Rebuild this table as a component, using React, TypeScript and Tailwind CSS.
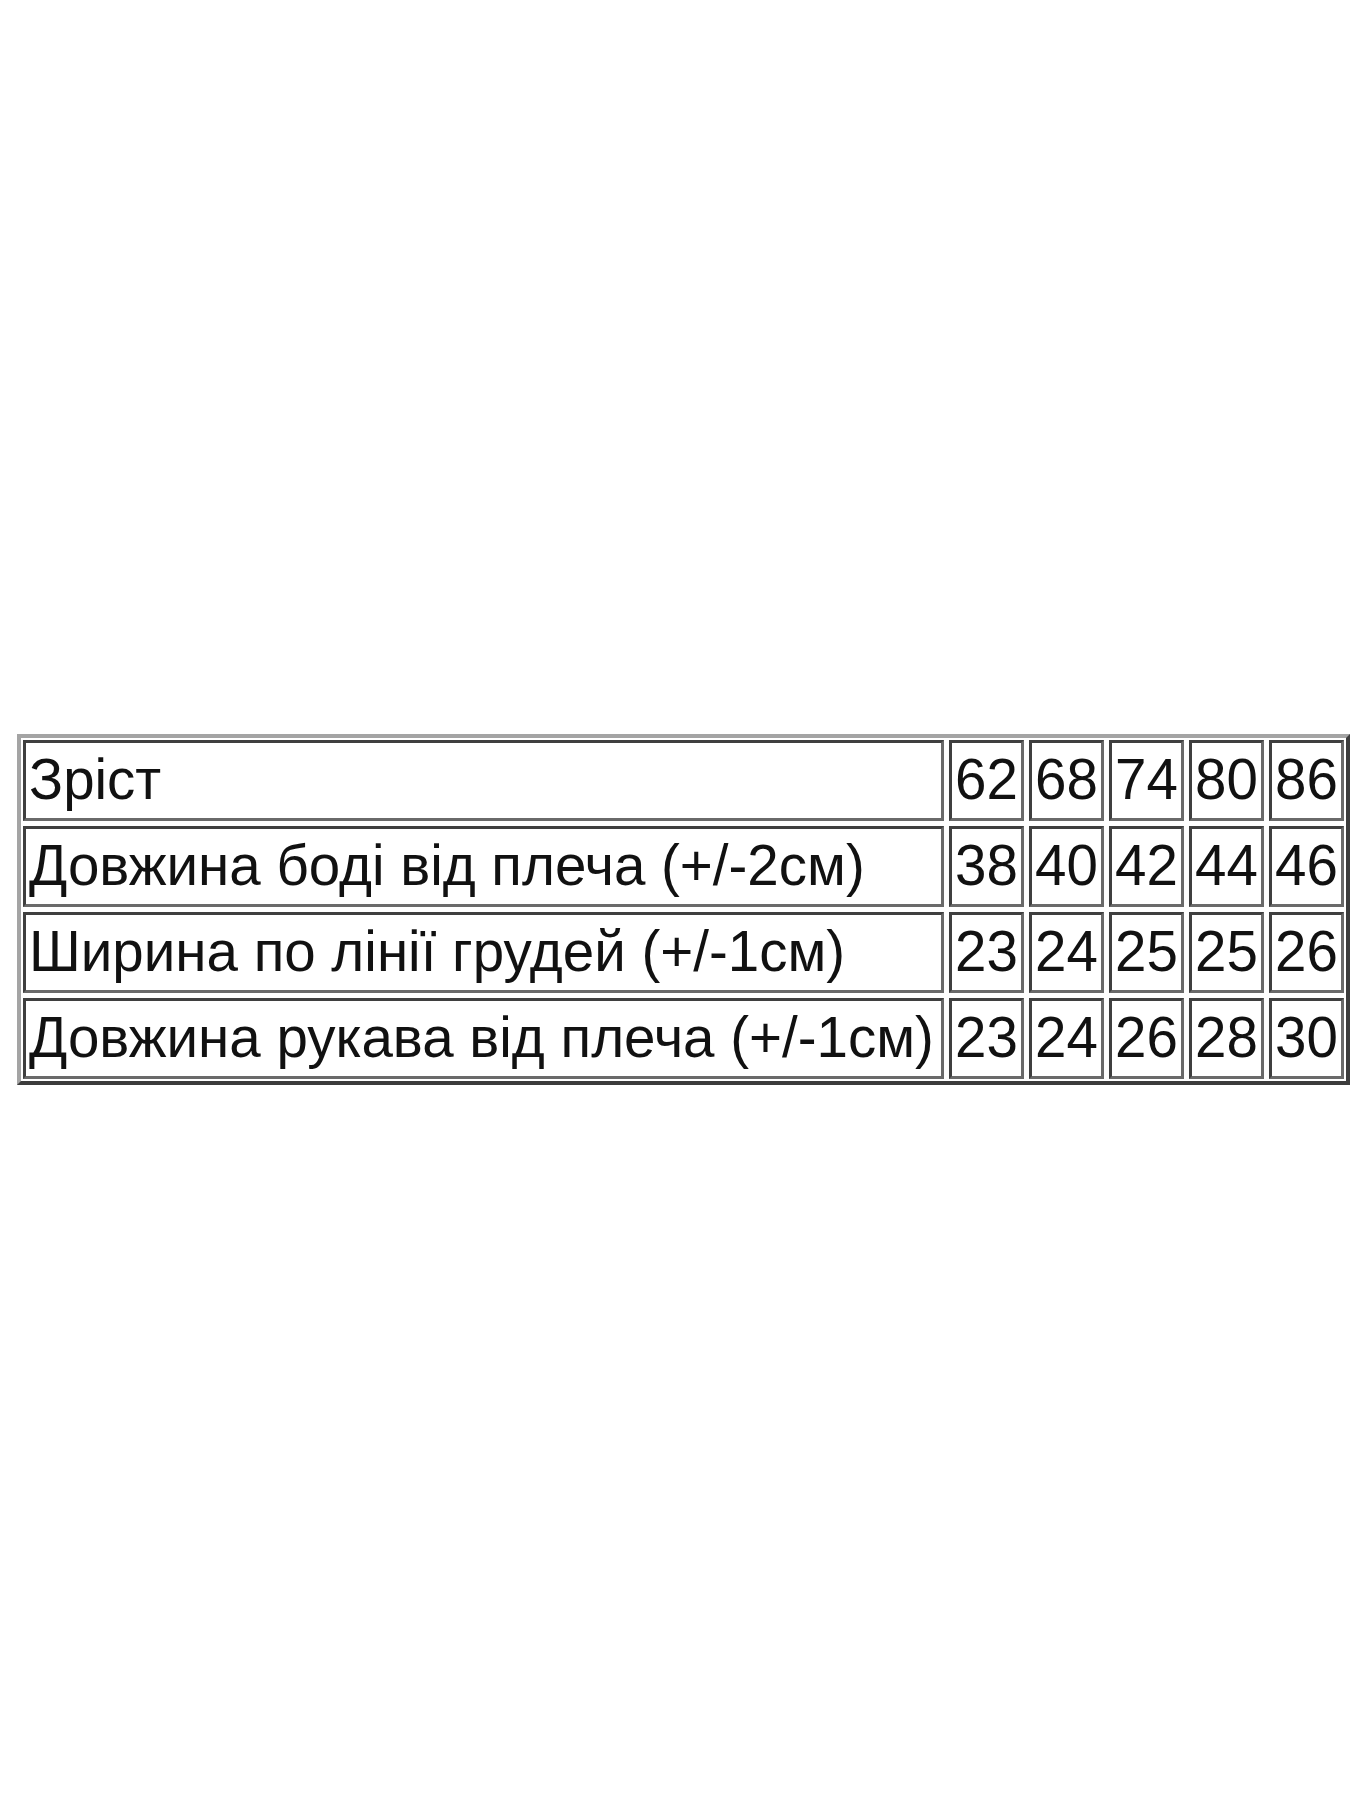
import React from "react";

const rows = [
  { label: "Зріст", values: ["62", "68", "74", "80", "86"] },
  { label: "Довжина боді від плеча (+/-2см)", values: ["38", "40", "42", "44", "46"] },
  { label: "Ширина по лінії грудей (+/-1см)", values: ["23", "24", "25", "25", "26"] },
  { label: "Довжина рукава від плеча (+/-1см)", values: ["23", "24", "26", "28", "30"] },
];

const cell =
  "h-[81px] flex items-center border-[3px] border-t-[#3f3f3f] border-l-[#3f3f3f] border-r-[#6a6a6a] border-b-[#6a6a6a] bg-white whitespace-nowrap overflow-hidden";

const App = () => {
  return (
    <div
      className="w-[1350px] h-[1800px] bg-white pt-[734px] pl-[17px]"
      style={{ fontFamily: '"Liberation Sans", Arial, sans-serif' }}
    >
      <div className="w-fit p-[2px] border-4 border-t-[#a4a4a4] border-l-[#a4a4a4] border-r-[#3c3c3c] border-b-[#3c3c3c]">
        <div className="grid grid-cols-[921px_repeat(5,75px)] gap-[5px] text-[56.5px] leading-none text-[#111]">
          {rows.map((row) => (
            <React.Fragment key={row.label}>
              <div className={cell + " pl-[3px]"}>{row.label}</div>
              {row.values.map((v, i) => (
                <div key={i} className={cell + " justify-center"}>
                  {v}
                </div>
              ))}
            </React.Fragment>
          ))}
        </div>
      </div>
    </div>
  );
};

export default App;
